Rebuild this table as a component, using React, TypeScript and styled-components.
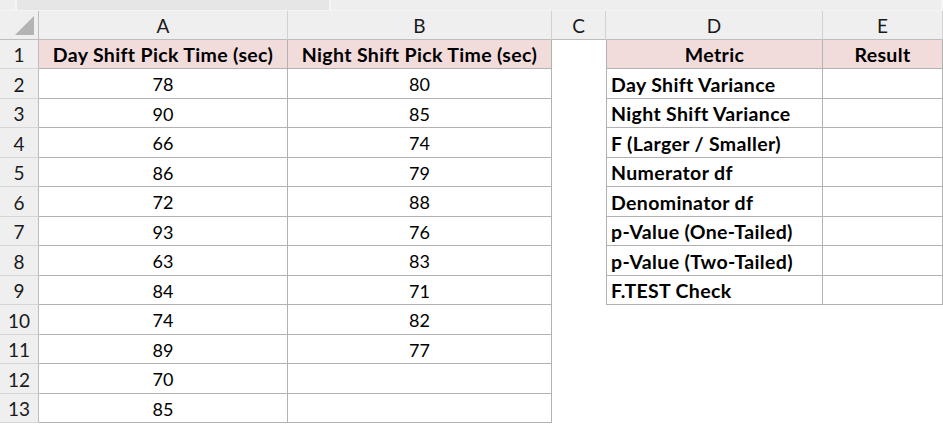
import React from "react";
import styled, { createGlobalStyle, css } from "styled-components";

const GlobalStyle = createGlobalStyle`
  html, body { margin: 0; padding: 0; background: #ffffff; }
  body { font-family: "Lato", "Open Sans", sans-serif; }
`;

const Sheet = styled.div`
  width: 943px;
  height: 425px;
  overflow: hidden;
  background: #ffffff;
  display: flex;
  flex-direction: column;
`;

const TopStrip = styled.div`
  height: 11px;
  flex: none;
  display: flex;
  background: #e9e9e9;
  border-bottom: 1px solid #f4f4f4;
  box-sizing: border-box;
`;

const StripSegment = styled.div<{ $w: number; $light?: boolean }>`
  width: ${(p) => p.$w}px;
  flex: none;
  background: ${(p) => (p.$light ? "#eeeeee" : "#e6e6e6")};
  border-right: 2px solid #f5f5f5;
  box-sizing: border-box;
`;

const Grid = styled.div`
  display: grid;
  grid-template-columns: 39px 249px 264px 54px 217px 120px;
  grid-template-rows: 28.5px repeat(13, 29.5px);
`;

const headerBase = css`
  background: #efefef;
  box-sizing: border-box;
  display: flex;
  align-items: center;
  justify-content: center;
  font-size: 19px;
  color: #1a1a1a;
`;

const Corner = styled.div`
  ${headerBase};
  position: relative;
  border-right: 1px solid #bdbdbd;
  border-bottom: 1px solid #bdbdbd;
`;

const CornerTriangle = styled.div`
  position: absolute;
  right: 4px;
  bottom: 4px;
  width: 0;
  height: 0;
  border-left: 19px solid transparent;
  border-bottom: 19px solid #b3b3b3;
`;

const ColHead = styled.div`
  ${headerBase};
  border-right: 1px solid #d2d2d2;
  border-bottom: 1px solid #bdbdbd;
  padding-top: 1px;
`;

const RowHead = styled.div`
  ${headerBase};
  border-right: 1px solid #bdbdbd;
  border-bottom: 1px solid #d6d6d6;
  padding-top: 2px;
`;

const Cell = styled.div<{
  $bordered?: boolean;
  $left?: boolean;
  $fill?: boolean;
  $bold?: boolean;
  $align?: "left" | "center";
}>`
  box-sizing: border-box;
  display: flex;
  align-items: center;
  justify-content: ${(p) => (p.$align === "left" ? "flex-start" : "center")};
  padding-top: 2px;
  padding-left: ${(p) => (p.$align === "left" ? "4px" : "0")};
  font-size: ${(p) => (p.$bold ? "19.5px" : "18px")};
  letter-spacing: ${(p) => (p.$bold ? "0.35px" : "0")};
  font-weight: ${(p) => (p.$bold ? 700 : 400)};
  color: #000000;
  white-space: nowrap;
  overflow: hidden;
  background: ${(p) => (p.$fill ? "#f2dcdb" : "#ffffff")};
  ${(p) =>
    p.$bordered &&
    css`
      border-right: 1px solid #b2b2b2;
      border-bottom: 1px solid #b2b2b2;
    `}
  ${(p) =>
    p.$left &&
    css`
      border-left: 1px solid #b2b2b2;
    `}
`;

const dayShift = [78, 90, 66, 86, 72, 93, 63, 84, 74, 89, 70, 85];
const nightShift = [80, 85, 74, 79, 88, 76, 83, 71, 82, 77];
const metrics = [
  "Day Shift Variance",
  "Night Shift Variance",
  "F (Larger / Smaller)",
  "Numerator df",
  "Denominator df",
  "p-Value (One-Tailed)",
  "p-Value (Two-Tailed)",
  "F.TEST Check",
];

export default function App() {
  const rows: React.ReactNode[] = [];
  for (let r = 1; r <= 13; r++) {
    const isHeader = r === 1;
    const a = isHeader ? "Day Shift Pick Time (sec)" : dayShift[r - 2] ?? "";
    const b = isHeader ? "Night Shift Pick Time (sec)" : nightShift[r - 2] ?? "";
    const inMetric = r <= 9;
    const d = isHeader ? "Metric" : inMetric ? metrics[r - 2] : "";
    const e = isHeader ? "Result" : "";
    rows.push(
      <React.Fragment key={r}>
        <RowHead>{r}</RowHead>
        <Cell $bordered $fill={isHeader} $bold={isHeader}>
          {a}
        </Cell>
        <Cell $bordered $fill={isHeader} $bold={isHeader}>
          {b}
        </Cell>
        <Cell />
        <Cell
          $bordered={inMetric}
          $left={inMetric}
          $fill={isHeader}
          $bold={inMetric}
          $align={isHeader ? "center" : "left"}
        >
          {d}
        </Cell>
        <Cell $bordered={inMetric} $fill={isHeader} $bold={isHeader}>
          {e}
        </Cell>
      </React.Fragment>
    );
  }

  return (
    <>
      <GlobalStyle />
      <Sheet>
        <TopStrip>
          <StripSegment $w={17} $light />
          <StripSegment $w={314} />
          <StripSegment $w={612} $light />
        </TopStrip>
        <Grid>
          <Corner>
            <CornerTriangle />
          </Corner>
          {["A", "B", "C", "D", "E"].map((c) => (
            <ColHead key={c}>{c}</ColHead>
          ))}
          {rows}
        </Grid>
      </Sheet>
    </>
  );
}
